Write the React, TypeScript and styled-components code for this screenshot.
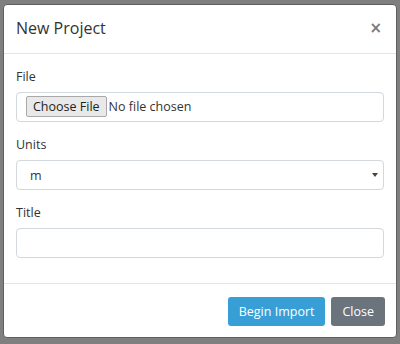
import React from "react";
import styled, { createGlobalStyle } from "styled-components";

const GlobalStyle = createGlobalStyle`
  html, body {
    margin: 0;
    padding: 0;
    background: #7f7f7f;
  }
  body {
    font-family: "Open Sans", "Liberation Sans", Arial, sans-serif;
    font-size: 12.5px;
    color: #333;
  }
  * {
    box-sizing: border-box;
  }
`;

const Backdrop = styled.div`
  width: 400px;
  height: 344px;
  padding: 4px 3px 6px 3px;
`;

const Dialog = styled.div`
  display: flex;
  flex-direction: column;
  width: 394px;
  height: 334px;
  background: #fff;
  border: 1px solid #5f5f5f;
  border-radius: 4px;
  overflow: hidden;
`;

const Header = styled.div`
  display: flex;
  align-items: center;
  justify-content: space-between;
  padding: 12px 14px 14px 12px;
  border-bottom: 1px solid #e5e5e5;
`;

const Title = styled.h4`
  margin: 0;
  font-size: 16px;
  font-weight: 400;
  line-height: 22px;
  color: #333;
`;

const CloseX = styled.button`
  border: 0;
  background: none;
  padding: 0;
  font-family: "DejaVu Sans", sans-serif;
  font-size: 15px;
  font-weight: 700;
  line-height: 1;
  color: #7a7a7a;
  cursor: pointer;
`;

const Body = styled.div`
  display: flex;
  flex-direction: column;
  gap: 13px;
  padding: 13px 12px 25px 12px;
  flex: 1;
`;

const Group = styled.div`
  display: flex;
  flex-direction: column;
`;

const Label = styled.label`
  font-size: 12.5px;
  line-height: 20px;
  margin-bottom: 5px;
  color: #333;
`;

const controlBox = `
  width: 100%;
  height: 30px;
  border: 1px solid #d3d8dd;
  border-radius: 4px;
  background: #fff;
  font-family: "Open Sans", "Liberation Sans", Arial, sans-serif;
  font-size: 12.5px;
  color: #333;
`;

const FileInput = styled.input`
  ${controlBox}
  padding: 3px 9px;

  &::file-selector-button {
    font-family: "Open Sans", "Liberation Sans", Arial, sans-serif;
    font-size: 12.5px;
    color: #222;
    background: #e9e9e9;
    border: 1px solid #a9a9a9;
    border-radius: 2px;
    padding: 1px 6px;
    margin-right: 2px;
  }
`;

const SelectWrap = styled.div`
  position: relative;
`;

const Select = styled.select`
  ${controlBox}
  appearance: none;
  padding: 0 13px;
  outline: none;
`;

const Arrow = styled.span`
  position: absolute;
  right: 6px;
  top: 13px;
  width: 0;
  height: 0;
  border-left: 3px solid transparent;
  border-right: 3px solid transparent;
  border-top: 4px solid #444;
  pointer-events: none;
`;

const TextInput = styled.input`
  ${controlBox}
  padding: 0 12px;
  outline: none;
`;

const Footer = styled.div`
  display: flex;
  justify-content: flex-end;
  gap: 6px;
  padding: 13px 11px 11px 12px;
  border-top: 1px solid #e5e5e5;
`;

const Button = styled.button<{ $variant?: "primary" | "secondary" }>`
  height: 29px;
  padding: 0 10px;
  border: 1px solid transparent;
  border-radius: 3px;
  font-family: "Open Sans", "Liberation Sans", Arial, sans-serif;
  font-size: 12.5px;
  color: #fff;
  background: ${({ $variant }) => ($variant === "primary" ? "#379fd6" : "#6b747c")};
  cursor: pointer;
`;

export default function App() {
  return (
    <Backdrop>
      <GlobalStyle />
      <Dialog>
        <Header>
          <Title>New Project</Title>
          <CloseX aria-label="Close">×</CloseX>
        </Header>
        <Body>
          <Group>
            <Label>File</Label>
            <FileInput type="file" />
          </Group>
          <Group>
            <Label>Units</Label>
            <SelectWrap>
              <Select defaultValue="m">
                <option value="m">m</option>
                <option value="ft">ft</option>
              </Select>
              <Arrow />
            </SelectWrap>
          </Group>
          <Group>
            <Label>Title</Label>
            <TextInput type="text" />
          </Group>
        </Body>
        <Footer>
          <Button $variant="primary">Begin Import</Button>
          <Button $variant="secondary">Close</Button>
        </Footer>
      </Dialog>
    </Backdrop>
  );
}
